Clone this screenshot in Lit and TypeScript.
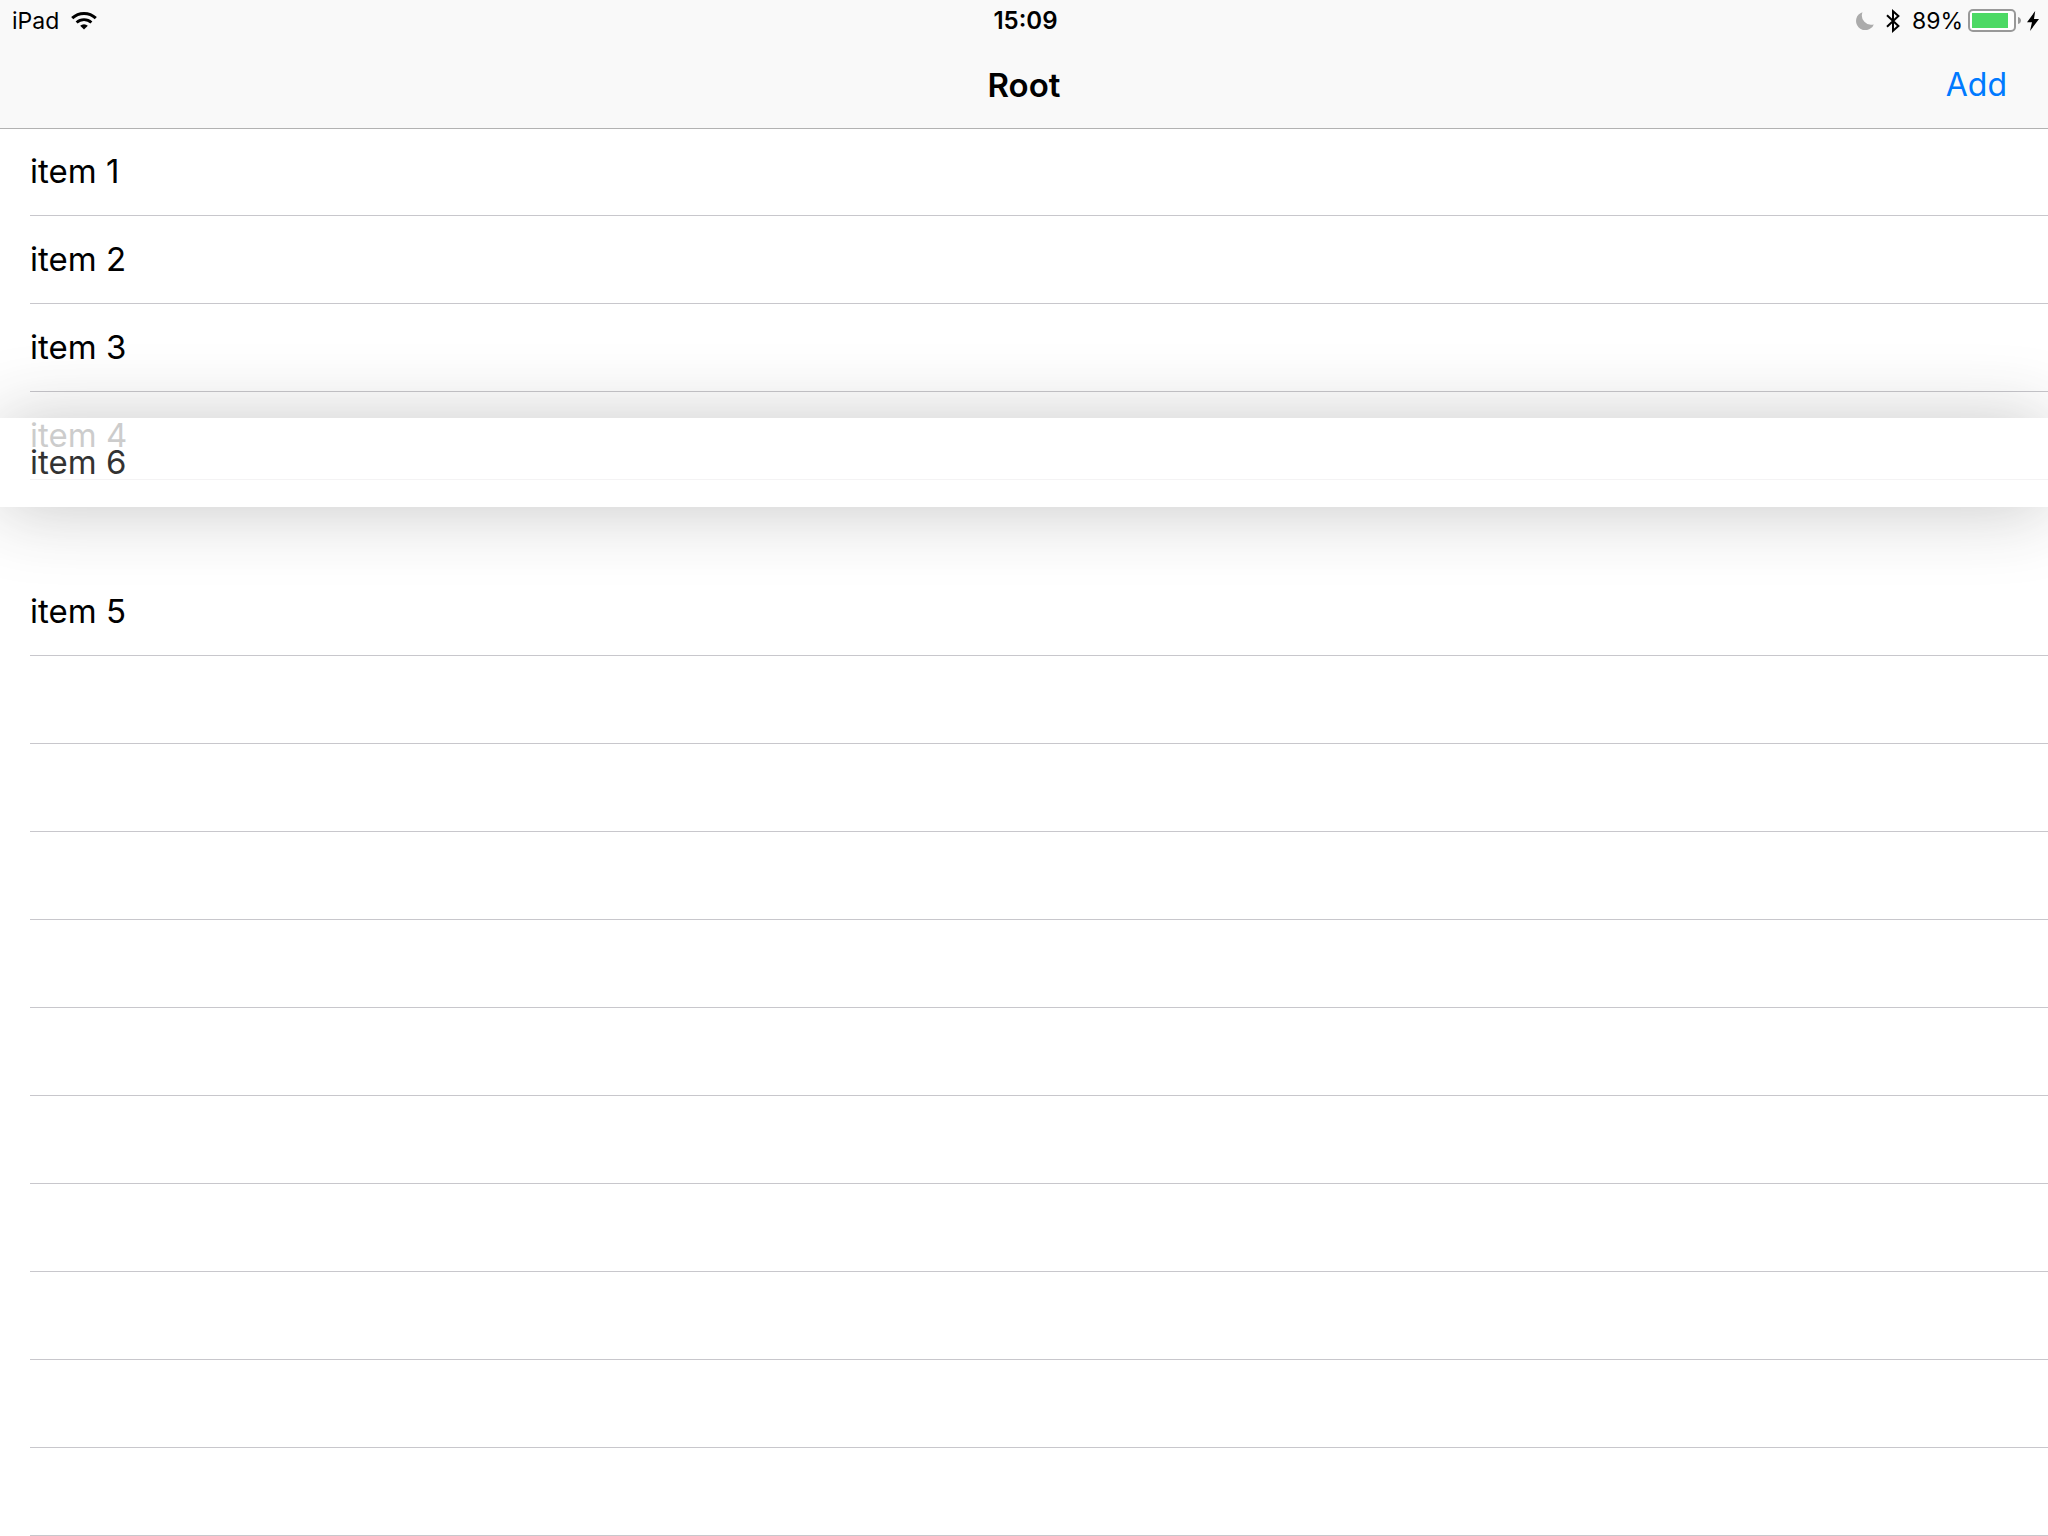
import { LitElement, html, css, svg } from "lit";
import { customElement, property } from "lit/decorators.js";
import { styleMap } from "lit/directives/style-map.js";

const WIFI = svg`
  <path d="M1.2 7.2A17 17 0 0 1 24.8 7.2" fill="none" stroke="#000" stroke-width="3" />
  <path d="M5.6 11.6A10.8 10.8 0 0 1 20.4 11.6" fill="none" stroke="#000" stroke-width="2.8" />
  <path d="M13 18.4L9.2 14.8A5.4 5.4 0 0 1 16.8 14.8Z" fill="#000" />
`;

@customElement("status-bar")
class StatusBar extends LitElement {
  @property() device = "";
  @property() time = "";
  @property({ type: Number }) battery = 0;

  static styles = css`
    :host {
      display: grid;
      grid-template-columns: 1fr auto 1fr;
      align-items: center;
      height: 42px;
      padding: 0 9px 0 12px;
      font-size: 23px;
      line-height: 28px;
    }
    svg {
      display: block;
    }
    .side {
      display: flex;
      align-items: center;
      gap: 12px;
    }
    .right {
      justify-content: flex-end;
    }
    .power {
      display: flex;
      align-items: center;
      gap: 5px;
    }
    .time {
      font-size: 24px;
      font-weight: 600;
    }
  `;

  render() {
    return html`
      <div class="side">
        <span>${this.device}</span>
        <svg width="26" height="20" viewBox="0 0 26 20" role="img" aria-label="Wi-Fi">${WIFI}</svg>
      </div>
      <div class="time">${this.time}</div>
      <div class="side right">
        <svg width="18" height="18" viewBox="0 0 18 18" role="img" aria-label="Do Not Disturb">
          <path d="M6.5 .2A9.2 9.2 0 1 0 17.8 12.4A9.3 9.3 0 0 1 6.5 .2Z" fill="#ababab" />
        </svg>
        <svg width="14" height="24" viewBox="0 0 14 24" role="img" aria-label="Bluetooth">
          <path d="M1 6.2L12.4 17L7 21.8V2.2L12.4 7L1 17.8" fill="none" stroke="#000" stroke-width="2" />
        </svg>
        <div class="power">
          <span>${this.battery}%</span>
          <svg width="54" height="24" viewBox="0 0 54 24" role="img" aria-label="Battery">
            <rect x="1" y="1" width="46" height="21" rx="4" fill="#fff" stroke="#999" stroke-width="2" />
            <rect x="4" y="4" width=${Math.round(this.battery * 0.4)} height="15" fill="#4cd964" />
            <path d="M50 8C54 9 54 14 50 15Z" fill="#999" />
          </svg>
          <svg width="12" height="20" viewBox="0 0 12 20" role="img" aria-label="Charging">
            <path d="M8.2 0L0 11.2H5L3 20L12 8H7Z" fill="#000" />
          </svg>
        </div>
      </div>
    `;
  }
}

@customElement("nav-bar")
class NavBar extends LitElement {
  @property() heading = "";
  @property() action = "";

  static styles = css`
    :host {
      display: grid;
      grid-template-columns: 1fr auto 1fr;
      align-items: center;
      height: 86px;
      padding: 0 41px;
      font-size: 32px;
      line-height: 40px;
    }
    .heading {
      grid-column: 2;
      margin: 0;
      font-size: 33px;
      font-weight: 600;
      line-height: 40px;
    }
    .action {
      justify-self: end;
      padding: 0;
      border: 0;
      background: none;
      color: #007aff;
      font: inherit;
      cursor: pointer;
    }
  `;

  render() {
    return html`
      <h1 class="heading">${this.heading}</h1>
      <button class="action" type="button">${this.action}</button>
    `;
  }
}

interface Row {
  label: string;
  /** Vertical distance in pixels between a lifted row and its slot. */
  lift?: number;
}

@customElement("item-list")
class ItemList extends LitElement {
  @property({ attribute: false }) rows: Row[] = [];

  static styles = css`
    :host {
      display: block;
    }
    .list {
      margin: 0;
      padding: 0;
      list-style: none;
    }
    .row {
      display: flex;
      height: 88px;
      padding-left: 30px;
    }
    .cell {
      flex: 1;
      display: flex;
      align-items: center;
      box-sizing: border-box;
      padding-bottom: 2px;
      border-bottom: 1px solid #c8c7cc;
    }
    .slot {
      position: relative;
      height: 88px;
    }
    .lifted {
      position: absolute;
      left: 0;
      right: 0;
      z-index: 1;
      display: flex;
      align-items: center;
      box-sizing: border-box;
      height: 89px;
      padding: 0 0 2px 30px;
      background: #fff;
      box-shadow: 0 2px 72px rgba(0, 0, 0, 0.27);
      opacity: 0.8;
    }
  `;

  render() {
    return html`
      <ul class="list">
        ${this.rows.map((row) =>
          row.lift === undefined
            ? html`<li class="row"><div class="cell">${row.label}</div></li>`
            : html`<li class="slot">
                <div class="lifted" style=${styleMap({ top: `${-row.lift}px` })}>${row.label}</div>
              </li>`
        )}
      </ul>
    `;
  }
}

@customElement("app-root")
class AppRoot extends LitElement {
  private rows: Row[] = [
    { label: "item 1" },
    { label: "item 2" },
    { label: "item 3" },
    { label: "item 4" },
    { label: "item 6", lift: 62 },
    { label: "item 5" },
    ...Array.from({ length: 10 }, () => ({ label: "" })),
  ];

  static styles = css`
    :host {
      display: block;
      min-height: 100vh;
      overflow: hidden;
      background: #fff;
      color: #000;
      font-family: Inter, "Liberation Sans", sans-serif;
      font-size: 33px;
      line-height: 40px;
    }
    .top {
      position: relative;
      z-index: 2;
      background: #f9f9f9;
      box-shadow: 0 1px 0 #b2b2b2;
    }
  `;

  render() {
    return html`
      <header class="top">
        <status-bar device="iPad" time="15:09" battery="89"></status-bar>
        <nav-bar heading="Root" action="Add"></nav-bar>
      </header>
      <main>
        <item-list .rows=${this.rows}></item-list>
      </main>
    `;
  }
}
